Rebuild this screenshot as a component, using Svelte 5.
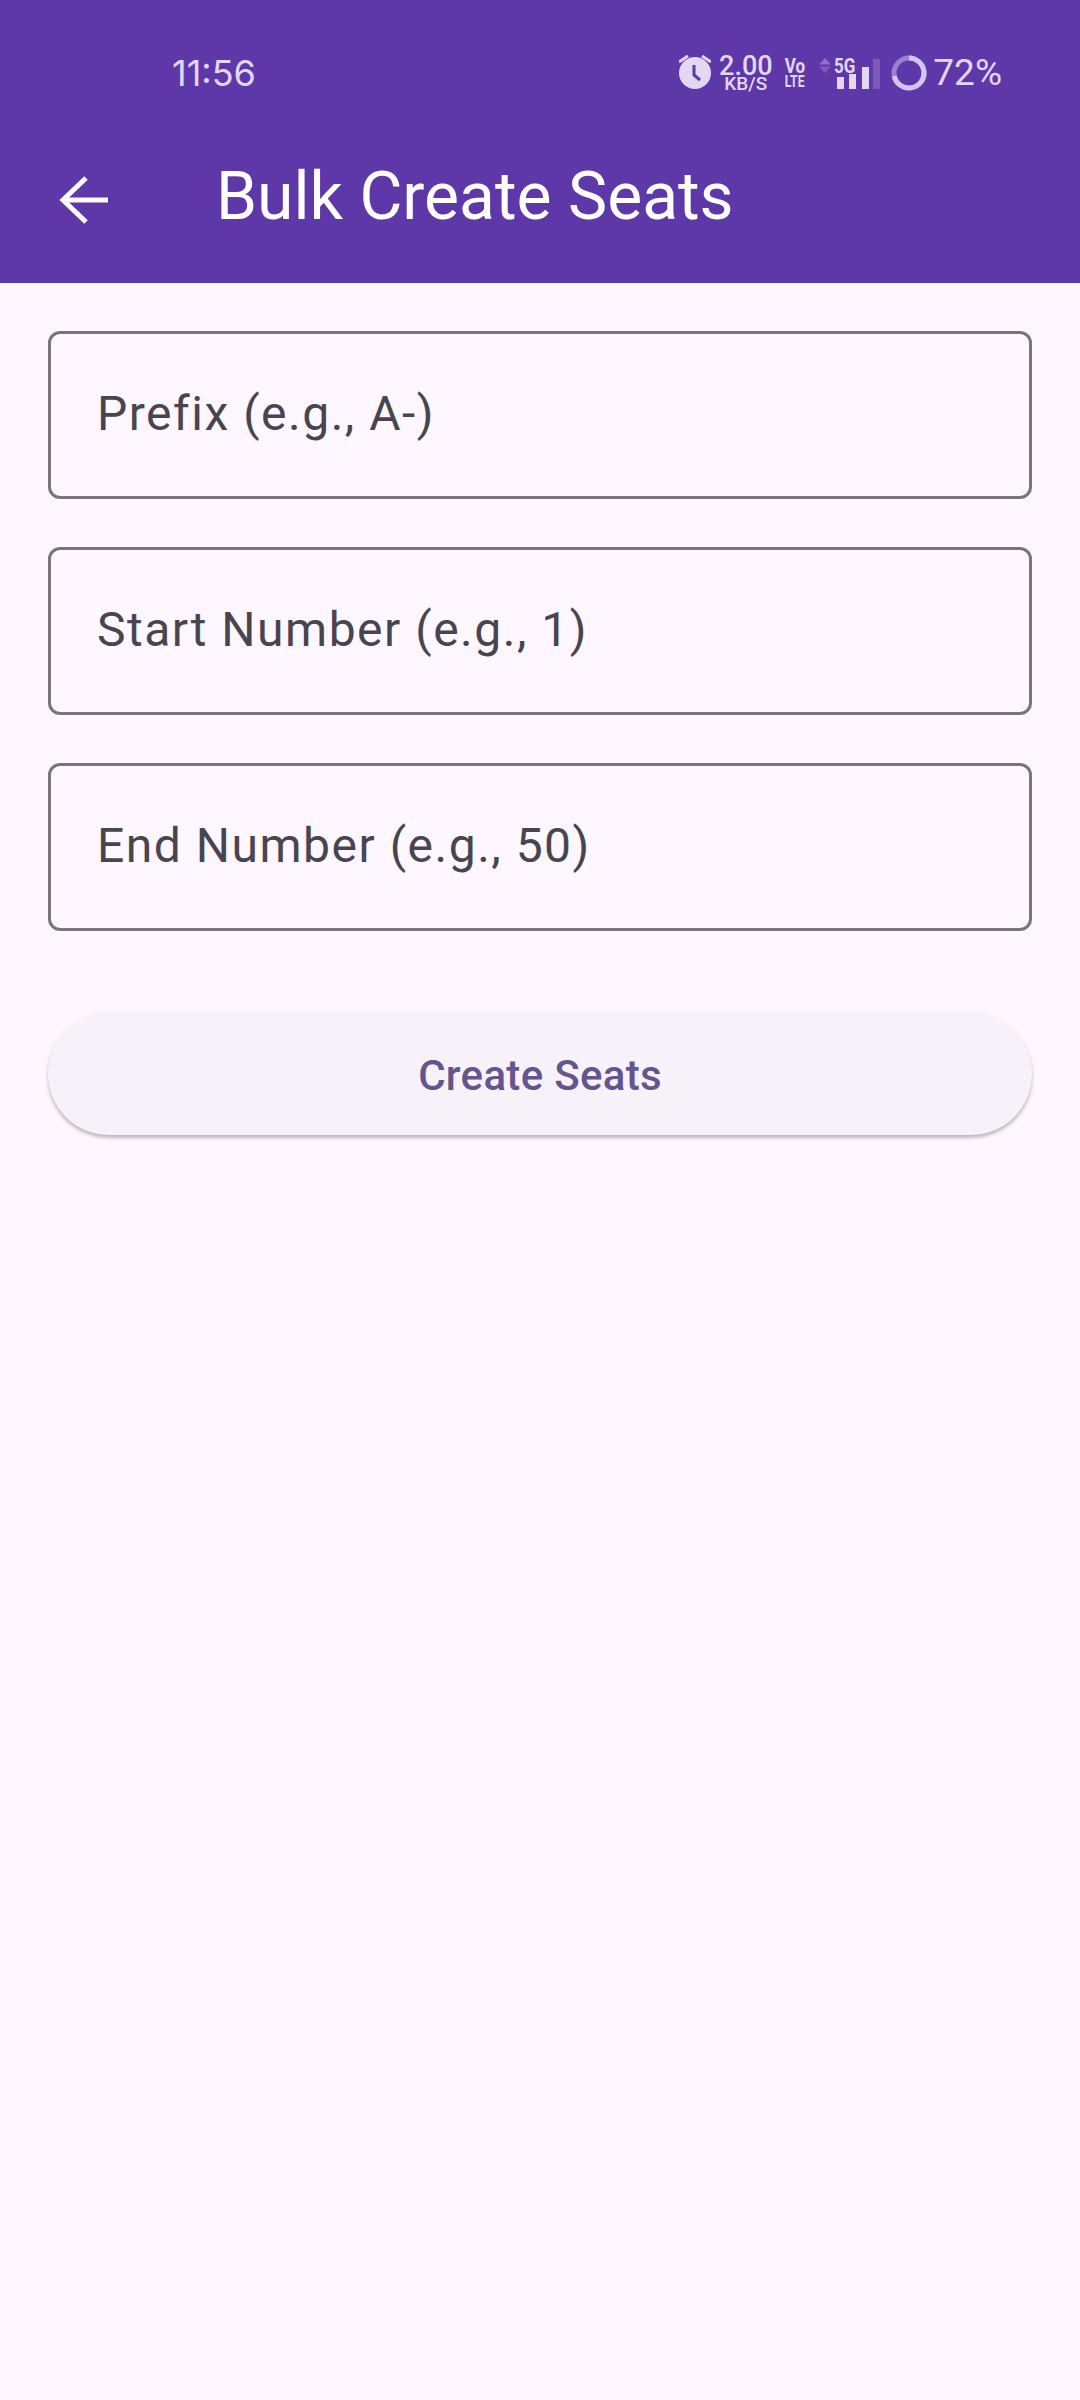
<script>
  const fields = ["Prefix (e.g., A-)", "Start Number (e.g., 1)", "End Number (e.g., 50)"];
</script>

<div class="screen">
  <header class="header">
    <div class="status">
      <span class="time">11:56</span>
      <div class="icons">
        <svg class="alarm" width="32" height="34" viewBox="0 0 32 34">
          <circle cx="16" cy="18" r="16" fill="#e2d7f5" />
          <path d="M15 10v10l6 5" fill="none" stroke="#5e38a9" stroke-width="3" />
          <path d="M0 7 9 1M32 7 23 1" stroke="#e2d7f5" stroke-width="3" />
        </svg>
        <div class="speed">
          <span class="speed-num">2.00</span>
          <span class="speed-unit">KB/S</span>
        </div>
        <div class="volte">
          <span class="vo">Vo</span>
          <span class="lte">LTE</span>
        </div>
        <svg class="updown" width="12" height="15" viewBox="0 0 12 15">
          <path d="M6 0 12 6.500H0Z" fill="#8d6fc6" />
          <path d="M6 15 12 8.500H0Z" fill="#7b5abc" />
        </svg>
        <div class="signal">
          <span class="five-g">5G</span>
          <i class="bar b1"></i>
          <i class="bar b2"></i>
          <i class="bar b3"></i>
          <i class="bar b4"></i>
        </div>
        <svg class="battery" width="36" height="36" viewBox="0 0 36 36">
          <circle cx="18" cy="18" r="15" fill="none" stroke="#9a80cf" stroke-width="5" />
          <path d="M18 3A15 15 0 1 1 3.300 20.900" fill="none" stroke="#d3c6ee" stroke-width="5" />
        </svg>
        <span class="pct">72%</span>
      </div>
    </div>
    <div class="toolbar">
      <svg class="back" width="52" height="48" viewBox="0 0 52 48">
        <path d="M49 24H4M27 2 4 24l23 22" fill="none" stroke="#fff" stroke-width="5" />
      </svg>
      <h1>Bulk Create Seats</h1>
    </div>
  </header>

  <main class="form">
    {#each fields as f}
      <div class="field">{f}</div>
    {/each}
    <button class="submit">Create Seats</button>
  </main>
</div>

<style>
  :global(body) {
    margin: 0;
    background: #fef7ff;
  }

  .screen {
    width: 1080px;
    height: 2400px;
    background: #fef7ff;
    font-family: Roboto, sans-serif;
    overflow: hidden;
  }

  .header {
    height: 283px;
    background: #5e38a9;
  }

  .status {
    height: 125px;
    display: flex;
    align-items: center;
    justify-content: space-between;
    padding: 21px 78px 0 172px;
    box-sizing: border-box;
    color: #e2d7f5;
  }

  .time {
    font-family: Inter, Roboto, sans-serif;
    font-size: 36px;
    line-height: 40px;
  }

  .icons {
    display: flex;
    align-items: center;
    height: 40px;
  }

  .alarm {
    margin: -2px 9px 0 0;
  }

  .speed {
    width: 51px;
    display: flex;
    flex-direction: column;
    align-items: center;
    margin-right: 13px;
  }

  .speed-num {
    font-size: 27px;
    line-height: 22px;
    font-weight: 500;
    white-space: nowrap;
  }

  .speed-unit {
    font-size: 19px;
    line-height: 14px;
    font-weight: 500;
    white-space: nowrap;
  }

  .volte {
    width: 21px;
    display: flex;
    flex-direction: column;
    align-items: center;
    font-weight: 700;
    margin-right: 14px;
  }

  .vo {
    font-size: 20px;
    line-height: 16px;
    transform: scaleX(0.85);
    white-space: nowrap;
  }

  .lte {
    font-size: 17px;
    line-height: 14px;
    transform: scaleX(0.72);
    white-space: nowrap;
  }

  .updown {
    margin: -16px 3px 0 0;
    flex: none;
  }

  .signal {
    position: relative;
    width: 46px;
    height: 31px;
    margin-right: 11px;
  }

  .five-g {
    position: absolute;
    left: -2px;
    top: -2px;
    font-size: 20px;
    line-height: 20px;
    font-weight: 700;
    transform: scaleX(0.85);
  }

  .bar {
    position: absolute;
    bottom: 0;
    width: 7px;
    background: #e2d7f5;
  }

  .b1 { left: 3px; height: 12px; }
  .b2 { left: 15px; height: 15px; }
  .b3 { left: 28px; height: 22px; }
  .b4 { left: 39px; height: 30px; background: #7b5abc; }

  .battery {
    margin-right: 6px;
  }

  .pct {
    font-size: 37px;
    line-height: 40px;
  }

  .toolbar {
    height: 158px;
    display: flex;
    align-items: center;
    padding: 0 0 9px 59px;
    box-sizing: border-box;
  }

  .back {
    flex: none;
  }

  h1 {
    margin: 0 0 6px 105px;
    font-size: 66px;
    line-height: 80px;
    font-weight: 400;
    color: #fff;
  }

  .form {
    display: flex;
    flex-direction: column;
    gap: 48px;
    padding: 48px;
  }

  .field {
    height: 168px;
    box-sizing: border-box;
    border: 3px solid #79747e;
    border-radius: 12px;
    display: flex;
    align-items: center;
    padding: 0 0 3px 46px;
    font-size: 48px;
    letter-spacing: 1.5px;
    color: #49454f;
  }

  .submit {
    height: 122px;
    margin-top: 34px;
    padding: 3px 0 0;
    border: 0;
    border-radius: 61px;
    background: #f7f2fa;
    box-shadow: 0 3px 3px rgba(0, 0, 0, 0.2), 0 2px 6px 1px rgba(0, 0, 0, 0.06);
    color: #65558f;
    font-family: Roboto, sans-serif;
    font-size: 42px;
    font-weight: 500;
    letter-spacing: 0.3px;
  }
</style>
